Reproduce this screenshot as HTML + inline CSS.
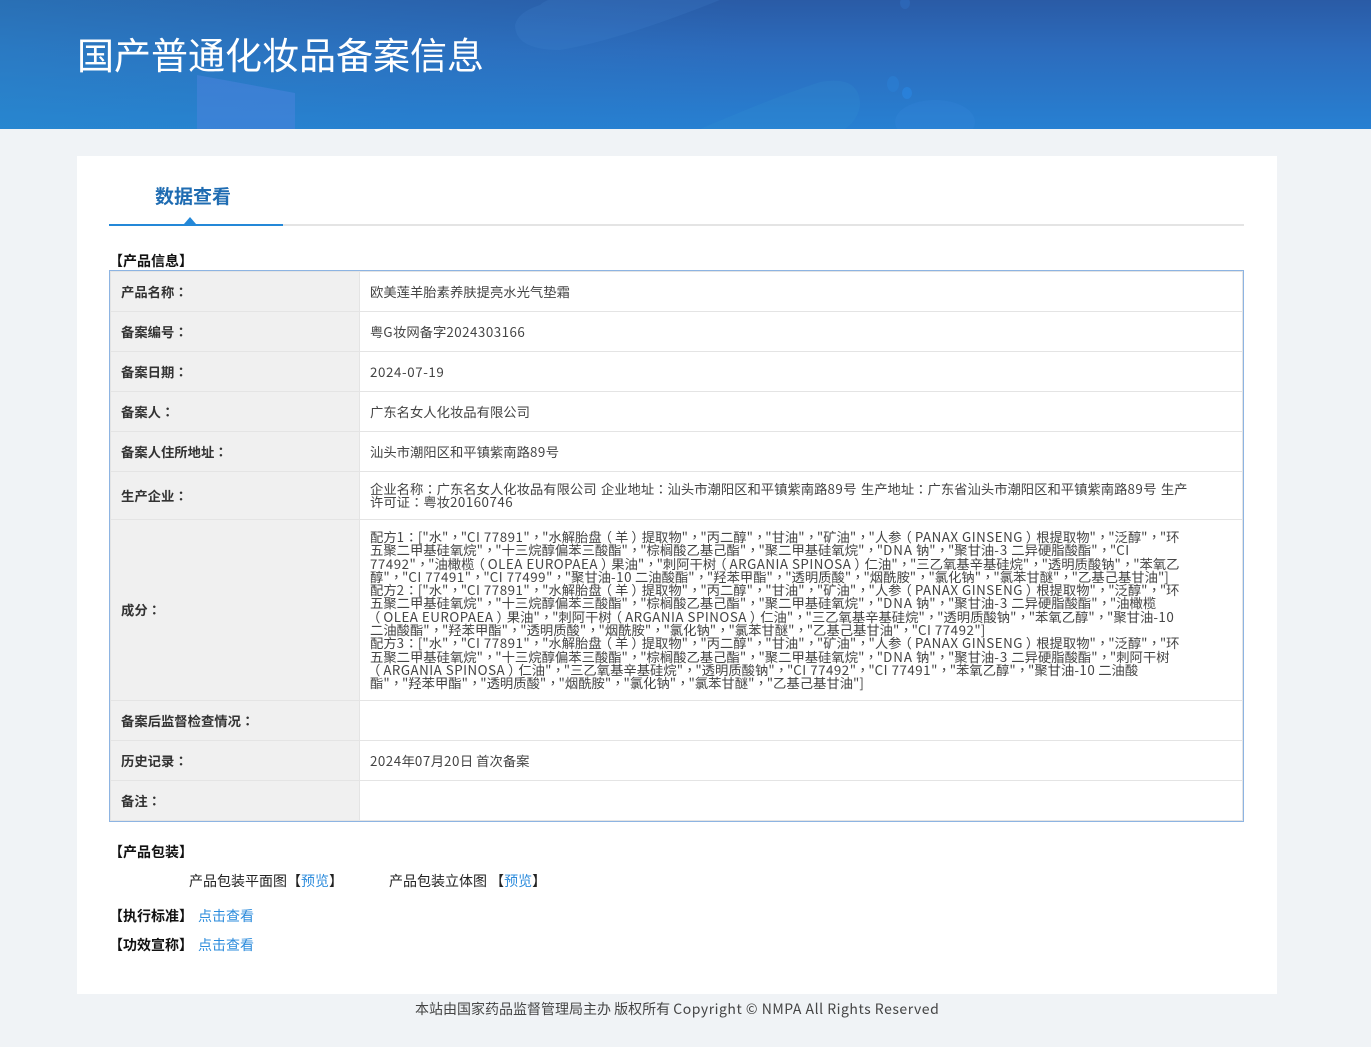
<!DOCTYPE html>
<html>
<head>
<meta charset="utf-8">
<title>国产普通化妆品备案信息</title>
<style>
html,body{margin:0;padding:0;width:1371px;height:1047px;overflow:hidden;background:#f0f3f6;}
body{position:relative;font-family:"Noto Sans CJK SC","Liberation Sans",sans-serif;color:#333;text-spacing-trim:space-all;}
i,u,s,b{font-style:normal;text-decoration:none;font-family:"Noto Sans CJK TC","Noto Sans CJK SC",sans-serif;}
u{letter-spacing:-1px;}
s{position:relative;left:-3px;}
b{position:relative;left:3px;font-weight:400;}
em{font-style:normal;letter-spacing:.5px;}
em.w{letter-spacing:1px;}
.a{position:absolute;white-space:nowrap;}
#hd{left:0;top:0;width:1371px;height:129px;overflow:hidden;background:linear-gradient(90deg,rgba(40,145,205,.38) 0%,rgba(40,130,200,.22) 30%,rgba(40,110,190,0) 55%),linear-gradient(180deg,#2a5ba6 0%,#2c6cbd 40%,#2780d2 100%);}
#card{left:77px;top:156px;width:1200px;height:838px;background:#fff;}
.lb{left:121px;width:230px;font-size:13.33px;font-weight:700;color:#333;line-height:16px;}
.v{left:370px;font-size:13.33px;color:#444;line-height:16px;}
.hl{left:111px;width:1131px;height:1px;background:#e4e4e4;}
.sec{font-size:14px;font-weight:700;color:#111;line-height:16px;}
.t{font-size:14px;color:#222;line-height:16px;}
.lnk{color:#2d8cdc;}
.m{left:370px;top:530px;font-size:13.33px;line-height:13.3px;color:#444;}
</style>
</head>
<body>
<div class="a" id="hd">
<svg width="1371" height="129" style="position:absolute;left:0;top:0">
<polygon points="197,75 295,93 295,129 197,129" fill="#4a84dc" opacity=".55"/>
<path d="M540 5 Q560 -15 700 0 L720 0 Q620 40 560 50 Q515 50 515 25 Q518 12 540 5Z" fill="#4a8fd8" opacity=".16"/>
<path d="M700 129 Q780 95 820 82 Q860 75 860 105 Q858 120 845 129Z" fill="#3a9ad6" opacity=".16"/>
<ellipse cx="935" cy="122" rx="40" ry="22" fill="#3a8ce0" opacity=".2"/>
<ellipse cx="893" cy="84" rx="6" ry="8" fill="#2a7fd6" opacity=".55"/>
<ellipse cx="907" cy="93" rx="5" ry="6" fill="#2a85e0" opacity=".7"/>
<ellipse cx="905" cy="3" rx="5" ry="6" fill="#2f6cc0" opacity=".6"/>
</svg>
<div class="a" style="left:77px;top:24px;font-size:37px;line-height:58px;color:#fff;">国产普通化妆品备案信息</div>
</div>

<div class="a" id="card"></div>

<div class="a" style="left:155px;top:182px;font-size:19px;font-weight:700;color:#1f6cb2;line-height:28px;">数据查看</div>
<div class="a" style="left:109px;top:224px;width:1135px;height:2px;background:#e4e4e4;"></div>
<div class="a" style="left:109px;top:224px;width:174px;height:2px;background:#2488d8;"></div>
<div class="a" style="left:184px;top:217px;width:0;height:0;border-left:6px solid transparent;border-right:6px solid transparent;border-bottom:7px solid #2488d8;"></div>

<div class="a sec" style="left:109px;top:253px;">【产品信息】</div>

<div class="a" style="left:109px;top:270px;width:1133px;height:550px;border:1px solid #8db4e2;box-shadow:inset 0 0 0 1px #e4e4e4;background:#fff;"></div>
<div class="a" style="left:111px;top:272px;width:248px;height:548px;background:#f0f0f0;"></div>
<div class="a" style="left:359px;top:272px;width:1px;height:548px;background:#e4e4e4;"></div>
<div class="a hl" style="top:311px"></div>
<div class="a hl" style="top:351px"></div>
<div class="a hl" style="top:391px"></div>
<div class="a hl" style="top:431px"></div>
<div class="a hl" style="top:471px"></div>
<div class="a hl" style="top:519px"></div>
<div class="a hl" style="top:700px"></div>
<div class="a hl" style="top:740px"></div>
<div class="a hl" style="top:780px"></div>

<div class="a lb" style="top:284px">产品名称<i>：</i></div>
<div class="a lb" style="top:324px">备案编号<i>：</i></div>
<div class="a lb" style="top:364px">备案日期<i>：</i></div>
<div class="a lb" style="top:404px">备案人<i>：</i></div>
<div class="a lb" style="top:444px">备案人住所地址<i>：</i></div>
<div class="a lb" style="top:488px">生产企业<i>：</i></div>
<div class="a lb" style="top:602px">成分<i>：</i></div>
<div class="a lb" style="top:713px">备案后监督检查情况<i>：</i></div>
<div class="a lb" style="top:753px">历史记录<i>：</i></div>
<div class="a lb" style="top:793px">备注<i>：</i></div>

<div class="a v" style="top:284px">欧美莲羊胎素养肤提亮水光气垫霜</div>
<div class="a v" style="top:324px">粤<em>G</em>妆网备字<em>2024303166</em></div>
<div class="a v" style="top:364px"><em style="letter-spacing:.6px">2024-07-19</em></div>
<div class="a v" style="top:404px">广东名女人化妆品有限公司</div>
<div class="a v" style="top:444px">汕头市潮阳区和平镇紫南路<em>89</em>号</div>
<div class="a v" style="top:482px;line-height:13.3px;word-spacing:1.3px">企业名称<i>：</i>广东名女人化妆品有限公司 企业地址<i>：</i>汕头市潮阳区和平镇紫南路<em>89</em>号 生产地址<i>：</i>广东省汕头市潮阳区和平镇紫南路<em>89</em>号 生产<br>许可证<i>：</i>粤妆<em>20160746</em></div>
<div class="a m">配方<em>1</em><i>：</i>["水"<u>，</u>"<em>CI 77891</em>"<u>，</u>"水解胎盘<s>（</s>羊<b>）</b>提取物"<u>，</u>"丙二醇"<u>，</u>"甘油"<u>，</u>"矿油"<u>，</u>"人参<s>（</s><em>PANAX GINSENG</em><b>）</b>根提取物"<u>，</u>"泛醇"<u>，</u>"环<br>五聚二甲基硅氧烷"<u>，</u>"十三烷醇偏苯三酸酯"<u>，</u>"棕榈酸乙基己酯"<u>，</u>"聚二甲基硅氧烷"<u>，</u>"<em class="w">DNA</em> 钠"<u>，</u>"聚甘油<em class="w">-3</em> 二异硬脂酸酯"<u>，</u>"<em>CI</em><br><em>77492</em>"<u>，</u>"油橄榄<s>（</s><em>OLEA EUROPAEA</em><b>）</b>果油"<u>，</u>"刺阿干树<s>（</s><em>ARGANIA SPINOSA</em><b>）</b>仁油"<u>，</u>"三乙氧基辛基硅烷"<u>，</u>"透明质酸钠"<u>，</u>"苯氧乙<br>醇"<u>，</u>"<em>CI 77491</em>"<u>，</u>"<em>CI 77499</em>"<u>，</u>"聚甘油<em>-10</em> 二油酸酯"<u>，</u>"羟苯甲酯"<u>，</u>"透明质酸"<u>，</u>"烟酰胺"<u>，</u>"氯化钠"<u>，</u>"氯苯甘醚"<u>，</u>"乙基己基甘油"]<br>配方<em>2</em><i>：</i>["水"<u>，</u>"<em>CI 77891</em>"<u>，</u>"水解胎盘<s>（</s>羊<b>）</b>提取物"<u>，</u>"丙二醇"<u>，</u>"甘油"<u>，</u>"矿油"<u>，</u>"人参<s>（</s><em>PANAX GINSENG</em><b>）</b>根提取物"<u>，</u>"泛醇"<u>，</u>"环<br>五聚二甲基硅氧烷"<u>，</u>"十三烷醇偏苯三酸酯"<u>，</u>"棕榈酸乙基己酯"<u>，</u>"聚二甲基硅氧烷"<u>，</u>"<em class="w">DNA</em> 钠"<u>，</u>"聚甘油<em class="w">-3</em> 二异硬脂酸酯"<u>，</u>"油橄榄<br><s>（</s><em>OLEA EUROPAEA</em><b>）</b>果油"<u>，</u>"刺阿干树<s>（</s><em>ARGANIA SPINOSA</em><b>）</b>仁油"<u>，</u>"三乙氧基辛基硅烷"<u>，</u>"透明质酸钠"<u>，</u>"苯氧乙醇"<u>，</u>"聚甘油<em>-10</em><br>二油酸酯"<u>，</u>"羟苯甲酯"<u>，</u>"透明质酸"<u>，</u>"烟酰胺"<u>，</u>"氯化钠"<u>，</u>"氯苯甘醚"<u>，</u>"乙基己基甘油"<u>，</u>"<em>CI 77492</em>"]<br>配方<em>3</em><i>：</i>["水"<u>，</u>"<em>CI 77891</em>"<u>，</u>"水解胎盘<s>（</s>羊<b>）</b>提取物"<u>，</u>"丙二醇"<u>，</u>"甘油"<u>，</u>"矿油"<u>，</u>"人参<s>（</s><em>PANAX GINSENG</em><b>）</b>根提取物"<u>，</u>"泛醇"<u>，</u>"环<br>五聚二甲基硅氧烷"<u>，</u>"十三烷醇偏苯三酸酯"<u>，</u>"棕榈酸乙基己酯"<u>，</u>"聚二甲基硅氧烷"<u>，</u>"<em class="w">DNA</em> 钠"<u>，</u>"聚甘油<em class="w">-3</em> 二异硬脂酸酯"<u>，</u>"刺阿干树<br><s>（</s><em>ARGANIA SPINOSA</em><b>）</b>仁油"<u>，</u>"三乙氧基辛基硅烷"<u>，</u>"透明质酸钠"<u>，</u>"<em>CI 77492</em>"<u>，</u>"<em>CI 77491</em>"<u>，</u>"苯氧乙醇"<u>，</u>"聚甘油<em>-10</em> 二油酸<br>酯"<u>，</u>"羟苯甲酯"<u>，</u>"透明质酸"<u>，</u>"烟酰胺"<u>，</u>"氯化钠"<u>，</u>"氯苯甘醚"<u>，</u>"乙基己基甘油"]</div>
<div class="a v" style="top:753px"><em>2024</em>年<em>07</em>月<em>20</em>日 首次备案</div>

<div class="a sec" style="left:109px;top:844px;">【产品包装】</div>
<div class="a t" style="left:189px;top:873px;">产品包装平面图【<span class="lnk">预览</span>】</div>
<div class="a t" style="left:389px;top:873px;">产品包装立体图 【<span class="lnk">预览</span>】</div>
<div class="a sec" style="left:109px;top:908px;">【执行标准】</div>
<div class="a t lnk" style="left:198px;top:908px;">点击查看</div>
<div class="a sec" style="left:109px;top:937px;">【功效宣称】</div>
<div class="a t lnk" style="left:198px;top:937px;">点击查看</div>

<div class="a" style="left:415px;top:1000px;font-size:14px;line-height:18px;color:#444;">本站由国家药品监督管理局主办 版权所有 <span style="letter-spacing:.52px">Copyright © NMPA All Rights Reserved</span></div>
</body>
</html>
